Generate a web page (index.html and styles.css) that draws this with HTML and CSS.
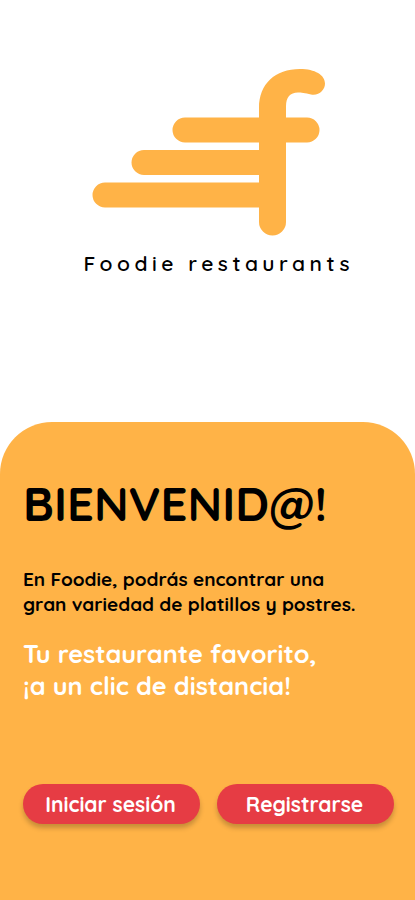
FILE: index.html
```html
<!DOCTYPE html>
<html lang="es">
<head>
  <meta charset="UTF-8">
  <meta name="viewport" content="width=device-width, initial-scale=1.0">
  <title>Foodie restaurants</title>
  <link rel="stylesheet" href="styles.css">
</head>
<body>
  <div class="container">
    <header class="brand">
      <svg class="logo" viewBox="0 0 234 168" aria-hidden="true">
        <path d="M93 49.5H215a12.2 12.2 0 0 1 0 25H93a12.2 12.2 0 0 1 0-25ZM52 82H179V107H52a12.2 12.2 0 0 1 0-25ZM13 114.5H179V139.5H13a12.2 12.2 0 0 1 0-25Z"/>
        <path d="M167 40C167 16 183 1 208 1C223 1 233 7 233 15.5C233 22 227 28 219 26.5C213 25 209 24.5 206 24.5C198 24.5 194 29.5 194 38V154a13.5 13.5 0 0 1-27 0Z"/>
      </svg>
      <p class="brand-name">Foodie restaurants</p>
    </header>

    <main class="welcome">
      <h1>BIENVENID@!</h1>
      <p class="description">En Foodie, podrás encontrar una<br>gran variedad de platillos y postres.</p>
      <p class="slogan">Tu restaurante favorito,<br>¡a un clic de distancia!</p>
      <div class="buttons">
        <button class="btn">Iniciar sesión</button>
        <button class="btn">Registrarse</button>
      </div>
    </main>
  </div>
</body>
</html>
```

FILE: styles.css
```css
/* Reset and Basic Styling */
* {
  margin: 0;
  padding: 0;
  box-sizing: border-box;
}
body {
  background: #fff;
  color: #000;
  font-family: 'Quicksand', 'Inter', sans-serif;
}
.container {
  display: flex;
  flex-direction: column;
  height: 100vh;
}

/* Logo */
.brand {
  height: 422px;
  padding-top: 68px;
}
.logo {
  display: block;
  width: 234px;
  height: 168px;
  margin-left: 92px;
  fill: #ffb347;
}
.brand-name {
  margin: 13px 0 0 83.5px;
  font-size: 21px;
  font-weight: 600;
  line-height: 28px;
  letter-spacing: 4.5px;
  white-space: nowrap;
}

/* Welcome panel */
.welcome {
  flex: 1;
  padding: 54px 21px 0 23px;
  background: #ffb347;
  border-radius: 52px 52px 0 0;
  white-space: nowrap;
}
h1 {
  font-size: 47.2px;
  font-weight: 700;
  line-height: 56px;
}
.description {
  margin-top: 35px;
  font-size: 19px;
  font-weight: 700;
  line-height: 24.5px;
}
.slogan {
  margin-top: 22px;
  color: #fff;
  font-size: 25.3px;
  font-weight: 700;
  line-height: 32px;
}

/* Buttons */
.buttons {
  display: flex;
  gap: 17px;
  margin-top: 82px;
}
.btn {
  flex: 1;
  height: 40px;
  padding: 0 2px 1px 0;
  border: none;
  border-radius: 20px;
  background: #e63c44;
  box-shadow: 0 4px 5px rgba(0, 0, 0, 0.22);
  color: #fff;
  font: inherit;
  font-size: 21px;
  font-weight: 700;
  cursor: pointer;
}
```
